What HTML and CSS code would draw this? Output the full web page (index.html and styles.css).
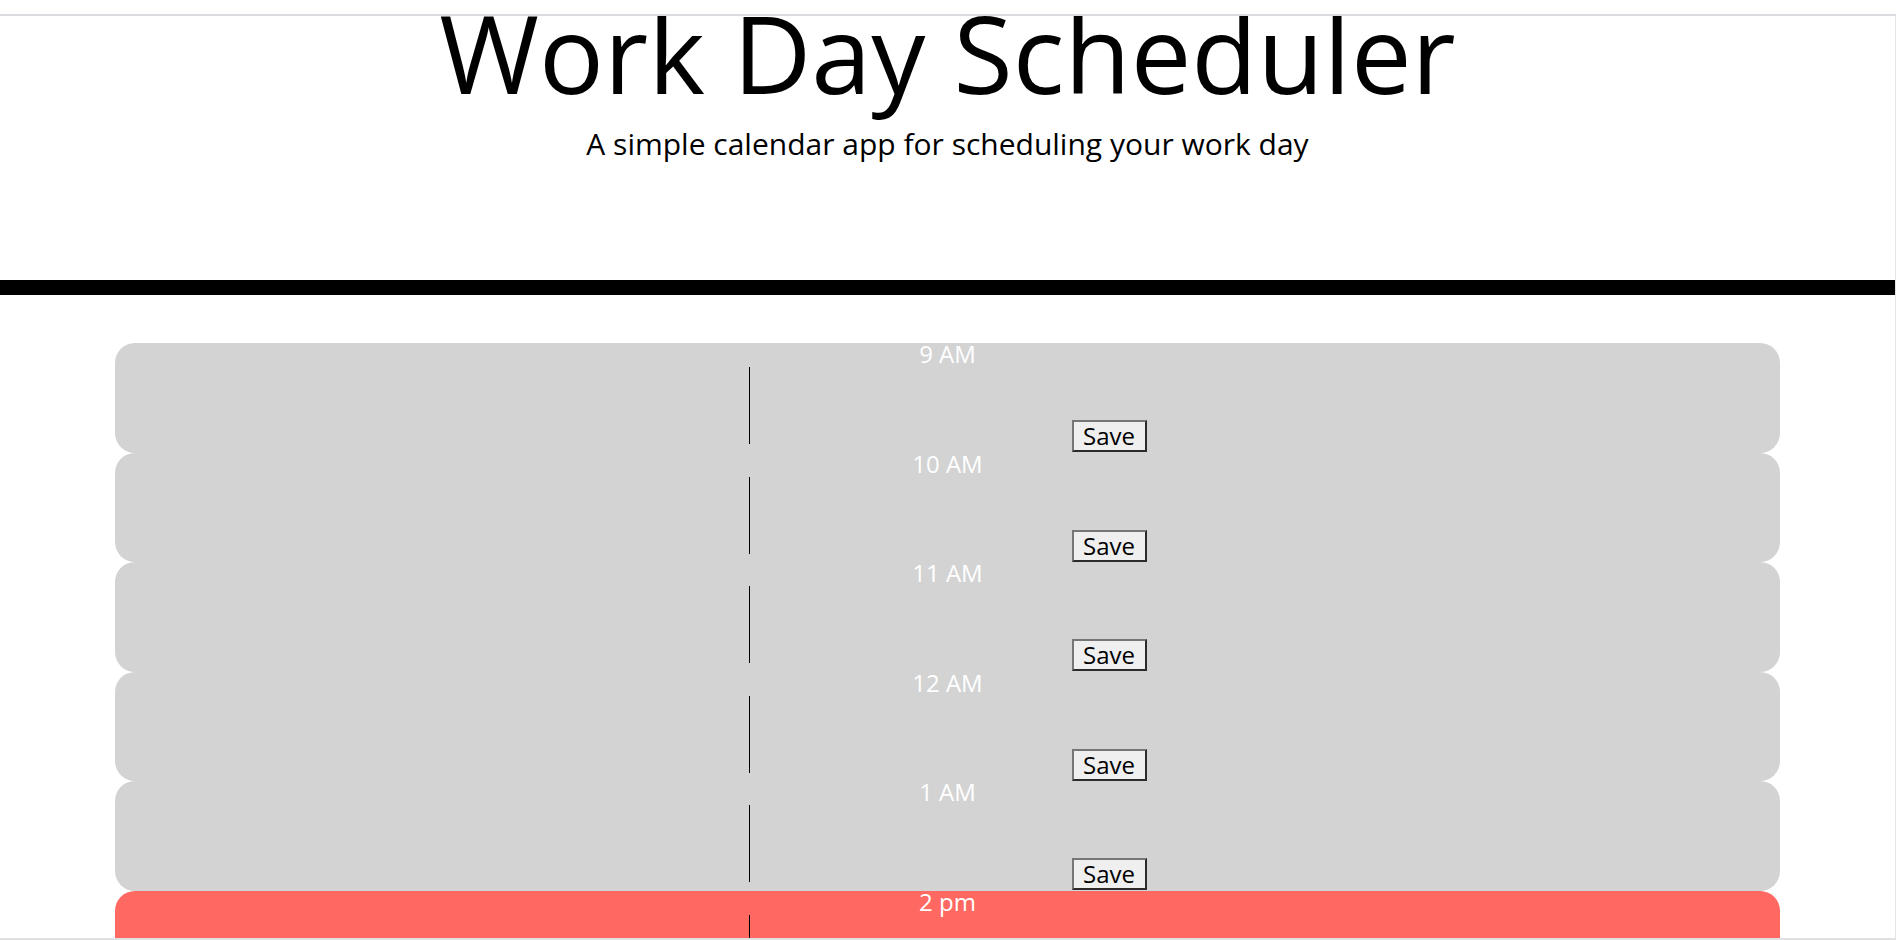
FILE: index.html
```
<!DOCTYPE html>
<html lang="en">
<head>
    <meta charset="UTF-8">
    <meta name="viewport" content="width=device-width, initial-scale=1.0">
    <title>Work Day Scheduler</title>
    <link rel="stylesheet" href="styles.css">
</head>
<body>
    <div class="frame">
        <header class="jumbotron">
            <h1 class="display-title">Work Day Scheduler</h1>
            <p class="lead">A simple calendar app for scheduling your work day</p>
        </header>
        <div class="container">
            <div class="time-block past">
                <div class="hour">9 AM</div>
                <div class="entry">
                    <textarea class="description"></textarea>
                    <button class="saveBtn">Save</button>
                </div>
            </div>
            <div class="time-block past">
                <div class="hour">10 AM</div>
                <div class="entry">
                    <textarea class="description"></textarea>
                    <button class="saveBtn">Save</button>
                </div>
            </div>
            <div class="time-block past">
                <div class="hour">11 AM</div>
                <div class="entry">
                    <textarea class="description"></textarea>
                    <button class="saveBtn">Save</button>
                </div>
            </div>
            <div class="time-block past">
                <div class="hour">12 AM</div>
                <div class="entry">
                    <textarea class="description"></textarea>
                    <button class="saveBtn">Save</button>
                </div>
            </div>
            <div class="time-block past">
                <div class="hour">1 AM</div>
                <div class="entry">
                    <textarea class="description"></textarea>
                    <button class="saveBtn">Save</button>
                </div>
            </div>
            <div class="time-block present">
                <div class="hour">2 pm</div>
                <div class="entry">
                    <textarea class="description"></textarea>
                    <button class="saveBtn">Save</button>
                </div>
            </div>
            <div class="time-block future">
                <div class="hour">3 pm</div>
                <div class="entry">
                    <textarea class="description"></textarea>
                    <button class="saveBtn">Save</button>
                </div>
            </div>
        </div>
    </div>
</body>
</html>
```
FILE: styles.css
```
* { margin: 0; padding: 0; box-sizing: border-box; }
html, body { height: 100%; }
body { font-family: 'Open Sans', 'Liberation Sans', sans-serif; background: #fff; color: #000; padding-top: 14px; overflow: hidden; }
.frame { height: 926px; border-top: 2px solid #dcdce0; border-right: 1px solid #e4e4e4; border-bottom: 2px solid #e0e0e0; overflow: hidden; }
.jumbotron { text-align: center; padding-bottom: 119px; border-bottom: 15px solid #000; }
.display-title { font-size: 108px; font-weight: 400; line-height: 109px; margin-top: -18px; }
.lead { font-size: 30px; line-height: 35px; margin-top: 19px; }
.container { margin: 48px 115px 0; }
.time-block { height: 109.5px; border-radius: 20px; display: flex; flex-direction: column; align-items: center; }
.past { background-color: #d3d3d3; }
.present { background-color: #ff6961; }
.future { background-color: #77dd77; }
.hour { height: 24px; line-height: 22px; font-size: 24px; color: #fff; }
.entry { display: flex; align-items: flex-end; gap: 4px; height: 85px; }
.description { align-self: flex-start; width: 319px; height: 77px; border: none; border-left: 1px solid #000; background: transparent; resize: none; outline: none; font-family: inherit; }
.saveBtn { width: 75px; height: 32px; padding: 0; font-family: inherit; font-size: 24px; line-height: 26px; color: #000; background-color: #efefef; border: 2px solid; border-color: #767676 #2b2b2b #2b2b2b #767676; cursor: pointer; }
.saveBtn:hover { background-color: #e5e5e5; }
```
